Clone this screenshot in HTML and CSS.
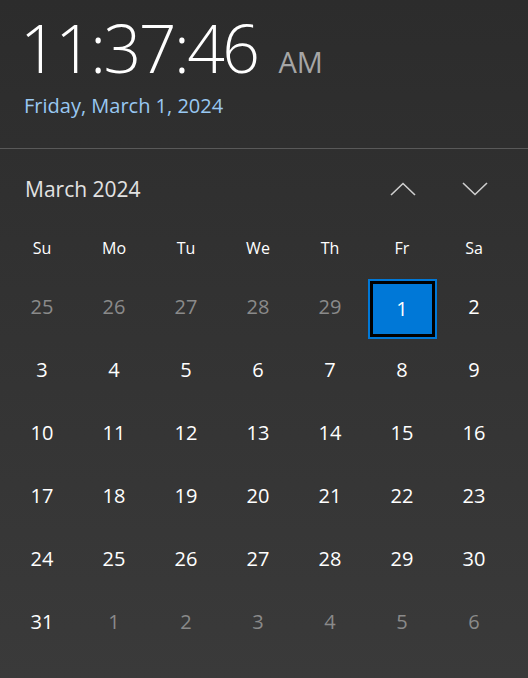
FILE: index.html
```html
<!DOCTYPE html>
<html lang="en">
<head>
    <meta charset="UTF-8">
    <meta name="viewport" content="width=device-width, initial-scale=1.0">
    <title>Clock</title>
    <link rel="stylesheet" href="styles.css">
</head>
<body>

    <div class="clock">
        <div class="time"><span class="hms">11:37:46</span><span class="ampm">AM</span></div>
        <div class="date">Friday, March 1, 2024</div>
    </div>

    <div class="calendar">
        <div class="cal-head">
            <span class="month">March 2024</span>
            <div class="arrows">
                <button class="arrow" aria-label="Previous month">
                    <svg width="26" height="14" viewBox="0 0 26 14"><path d="M1 13 L13 1.5 L25 13" fill="none" stroke="#cfcfcf" stroke-width="1.6"/></svg>
                </button>
                <button class="arrow" aria-label="Next month">
                    <svg width="26" height="14" viewBox="0 0 26 14"><path d="M1 1 L13 12.5 L25 1" fill="none" stroke="#cfcfcf" stroke-width="1.6"/></svg>
                </button>
            </div>
        </div>

        <div class="days">
            <span class="dow">Su</span><span class="dow">Mo</span><span class="dow">Tu</span><span class="dow">We</span><span class="dow">Th</span><span class="dow">Fr</span><span class="dow">Sa</span>

            <span class="day other">25</span><span class="day other">26</span><span class="day other">27</span><span class="day other">28</span><span class="day other">29</span><span class="day today"><b>1</b></span><span class="day">2</span>
            <span class="day">3</span><span class="day">4</span><span class="day">5</span><span class="day">6</span><span class="day">7</span><span class="day">8</span><span class="day">9</span>
            <span class="day">10</span><span class="day">11</span><span class="day">12</span><span class="day">13</span><span class="day">14</span><span class="day">15</span><span class="day">16</span>
            <span class="day">17</span><span class="day">18</span><span class="day">19</span><span class="day">20</span><span class="day">21</span><span class="day">22</span><span class="day">23</span>
            <span class="day">24</span><span class="day">25</span><span class="day">26</span><span class="day">27</span><span class="day">28</span><span class="day">29</span><span class="day">30</span>
            <span class="day">31</span><span class="day other">1</span><span class="day other">2</span><span class="day other">3</span><span class="day other">4</span><span class="day other">5</span><span class="day other">6</span>
        </div>
    </div>

</body>
</html>
```

FILE: styles.css
```css
html {
    background: #333;
}
body {
    font-family: "Open Sans", "Noto Sans", sans-serif;
    margin: 0;
    width: 528px;
    height: 678px;
    overflow: hidden;
    color: #fff;
    background: linear-gradient(#2c2c2c, #3a3a3a);
}
.clock {
    padding: 7px 0 0 20px;
    height: 141px;
    border-bottom: 1px solid #595959;
}
.time {
    display: flex;
    align-items: baseline;
    line-height: 80px;
}
.hms {
    font-size: 66px;
    font-weight: 300;
    letter-spacing: -2.5px;
    padding-right: 3px;
}
.ampm {
    font-size: 29px;
    color: #a6a6a6;
    margin-left: 18px;
}
.date {
    color: #99c8f2;
    font-size: 20px;
    padding-left: 4px;
    margin-top: -10px;
}
.calendar {
    padding: 0 18px 0 6px;
}
.cal-head {
    display: flex;
    justify-content: space-between;
    align-items: center;
    height: 80px;
    padding-left: 19px;
}
.month {
    font-size: 21px;
    color: #e2e2e2;
}
.arrows {
    display: flex;
    gap: 46px;
    padding-right: 22px;
}
.arrow {
    background: none;
    border: none;
    padding: 0;
    width: 26px;
    height: 14px;
    display: flex;
}
.days {
    display: grid;
    grid-template-columns: repeat(7, 72px);
    grid-template-rows: 46px repeat(6, 63px);
}
.dow, .day {
    display: flex;
    align-items: center;
    justify-content: center;
}
.dow {
    font-size: 16px;
    align-items: flex-start;
    padding-top: 8px;
}
.day {
    font-size: 20px;
}
.day.other {
    color: #8a8a8a;
}
.today b {
    font-weight: normal;
    display: flex;
    align-items: center;
    justify-content: center;
    width: 59px;
    height: 50px;
    background: #0078d7;
    border: 3px solid #000;
    outline: 2px solid #0078d7;
    margin-top: 4px;
}
```
